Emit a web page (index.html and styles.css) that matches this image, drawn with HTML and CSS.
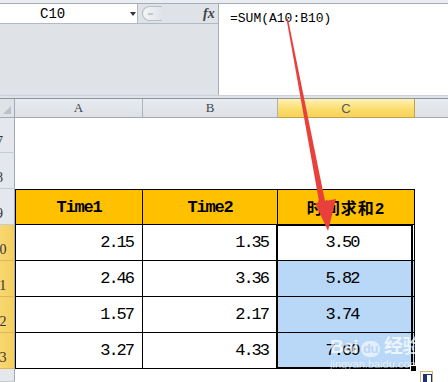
FILE: index.html
```html
<!DOCTYPE html>
<html lang="zh-CN">
<head>
    <meta charset="UTF-8">
    <title>时间求和</title>
    <link rel="stylesheet" href="styles.css">
</head>
<body>
    <div class="formula-area">
        <div class="left-pane">
            <div class="name-row">
                <div class="name-box">C10<span class="drop"></span></div>
                <div class="pill"><span></span></div>
                <div class="fx">fx</div>
            </div>
        </div>
        <div class="formula">=SUM(A10:B10)</div>
    </div>
    <div class="splitter"></div>

    <div class="sheet">
        <div class="corner"></div>
        <div class="col-head">A</div>
        <div class="col-head">B</div>
        <div class="col-head on">C</div>
        <div class="col-head blank"></div>

        <div class="row-head">7</div>
        <div class="empty"></div>
        <div class="row-head">8</div>
        <div class="empty"></div>

        <div class="row-head">9</div>
        <div class="cell title first">Time1</div>
        <div class="cell title">Time2</div>
        <div class="cell title cjk">时间求和2</div>
        <div></div>

        <div class="row-head on">10</div>
        <div class="cell num first">2.15</div>
        <div class="cell num">1.35</div>
        <div class="cell sum active">3.50</div>
        <div></div>

        <div class="row-head on">11</div>
        <div class="cell num first">2.46</div>
        <div class="cell num">3.36</div>
        <div class="cell sum sel">5.82</div>
        <div></div>

        <div class="row-head on">12</div>
        <div class="cell num first">1.57</div>
        <div class="cell num">2.17</div>
        <div class="cell sum sel">3.74</div>
        <div></div>

        <div class="row-head on">13</div>
        <div class="cell num first">3.27</div>
        <div class="cell num">4.33</div>
        <div class="cell sum sel">7.60</div>
        <div></div>

        <div class="row-head"></div>
        <div class="empty"></div>
    </div>

    <!-- paste options button and watermark sit over the grid -->
    <div class="paste"><span></span></div>
    <div class="mark">
        <div class="mark-top">Bai<span class="paw">du</span>经验</div>
        <div class="mark-url">jingyan.baidu.com</div>
    </div>

    <svg class="arrow" width="448" height="382" viewBox="0 0 448 382">
        <polygon points="286.5,19 288,19 326,206 320,207" fill="#e8403b"/>
        <polygon points="315,203 336,199 328,231" fill="#e8403b"/>
    </svg>
</body>
</html>
```

FILE: styles.css
```css
body, html {
    margin: 0;
    padding: 0;
    width: 448px;
    height: 382px;
    overflow: hidden;
    background-color: white;
    font-family: "Liberation Mono", "Noto Sans CJK SC", monospace;
    color: #000;
}
.formula-area {
    display: flex;
    height: 95px;
    box-sizing: border-box;
    padding-top: 3px;
    background-color: #e9ecf0;
}
.left-pane {
    width: 218px;
    background-color: #dfe3e8;
    border-top: 1px solid #a6adb5;
}
.name-row {
    display: flex;
    align-items: center;
    height: 19px;
    border-bottom: 1px solid #b3b9c1;
}
.name-box {
    position: relative;
    width: 138px;
    height: 19px;
    box-sizing: border-box;
    padding-left: 40px;
    background-color: white;
    border-right: 1px solid #b3b9c1;
    font-size: 14px;
    line-height: 20px;
}
.drop {
    position: absolute;
    left: 130px;
    top: 8px;
    border-left: 3px solid transparent;
    border-right: 3px solid transparent;
    border-top: 4px solid #333;
}
.pill {
    width: 20px;
    height: 15px;
    margin-left: 4px;
    box-sizing: border-box;
    border: 1px solid #b8bdc4;
    border-right: none;
    border-radius: 8px 0 0 8px;
    background: linear-gradient(90deg, #f4f5f7, #dfe3e8);
    display: flex;
    align-items: center;
    padding-left: 5px;
}
.pill span {
    width: 5px;
    height: 2px;
    background-color: #c4c8ce;
}
.fx {
    margin-left: 41px;
    font-family: "Liberation Serif", serif;
    font-style: italic;
    font-weight: bold;
    font-size: 14px;
    color: #444;
}
.formula {
    flex: 1;
    background-color: white;
    border-top: 1px solid #a6adb5;
    border-left: 1px solid #a6adb5;
    padding: 7px 0 0 11px;
    font-size: 13px;
    line-height: 16px;
}
.splitter {
    height: 2px;
    background-color: #dfe3e8;
    border-top: 1px solid #cdd2d8;
    border-bottom: 1px solid #8e969f;
}
.sheet {
    position: relative;
    display: grid;
    grid-template-columns: 30px 128px 135px 137px 1fr;
    grid-template-rows: 19px 35px 36px 36px 36px 36px 36px 36px 13px;
    margin-left: -15px;
}
.corner {
    position: relative;
    background-color: #dfe3e8;
    border-right: 1px solid #9eaab7;
    border-bottom: 1px solid #9eaab7;
}
.corner::after {
    content: "";
    position: absolute;
    right: 3px;
    bottom: 3px;
    border-left: 8px solid transparent;
    border-bottom: 8px solid #b9c0c8;
}
.col-head {
    display: flex;
    align-items: center;
    justify-content: center;
    background: linear-gradient(#e8ebef, #dde1e6);
    border-right: 1px solid #a9b3bd;
    border-bottom: 1px solid #9eaab7;
    font-family: "Liberation Serif", serif;
    font-size: 13px;
    color: #3c4650;
}
.col-head.on {
    background: linear-gradient(#fff1b5, #fbdc6a 60%, #f7d15a);
    border-right-color: #c1a24c;
    border-bottom-color: #c1a24c;
    font-family: "Liberation Sans", sans-serif;
    color: #55585c;
}
.col-head.blank {
    border-right: none;
}
.row-head {
    display: flex;
    align-items: flex-end;
    justify-content: center;
    padding-bottom: 2px;
    box-sizing: border-box;
    background-color: #e4e7ec;
    border-right: 1px solid #9eaab7;
    border-bottom: 1px solid #c5ccd4;
    font-family: "Liberation Serif", serif;
    font-size: 14px;
    color: #333;
}
.row-head.on {
    background: linear-gradient(90deg, #fbe08a, #f5cf5d);
    border-bottom-color: #d9b85a;
}
.empty {
    grid-column: span 4;
}
.cell {
    display: flex;
    align-items: center;
    box-sizing: border-box;
    border-right: 1px solid #000;
    border-bottom: 1px solid #000;
}
.cell.first {
    border-left: 1px solid #000;
}
.title {
    justify-content: center;
    background-color: #ffc000;
    border-top: 1px solid #000;
    font-weight: bold;
    font-size: 17px;
    letter-spacing: -1.2px;
}
.title.cjk {
    font-size: 16px;
    letter-spacing: 1px;
}
.num {
    justify-content: flex-end;
    padding-right: 9px;
    font-size: 17px;
    letter-spacing: -2px;
}
.sum {
    justify-content: center;
    padding-right: 8px;
    font-size: 17px;
    letter-spacing: -2px;
}
.sel {
    background-color: #b9d7f6;
}
.active {
    position: relative;
    background-color: white;
}
.active::after {
    content: "";
    position: absolute;
    left: -2px;
    top: -1px;
    width: 137px;
    height: 145px;
    box-sizing: border-box;
    border: 2px solid #000;
}
.active::before {
    content: "";
    position: absolute;
    left: 132px;
    top: 140px;
    width: 5px;
    height: 5px;
    background-color: #000;
    border: 1px solid white;
    z-index: 2;
}
.paste {
    position: absolute;
    left: 420px;
    top: 371px;
    width: 13px;
    height: 13px;
    box-sizing: border-box;
    border: 1px solid #c9b27a;
    background-color: #fdfaf0;
    padding: 2px;
}
.paste span {
    display: block;
    width: 7px;
    height: 7px;
    background: linear-gradient(90deg, #1c2f7a 50%, #ffffff 50%);
    border: 1px solid #1c2f7a;
}
.mark {
    position: absolute;
    left: 330px;
    top: 336px;
    color: rgba(255, 255, 255, 0.75);
    font-family: "Liberation Sans", "Noto Sans CJK SC", sans-serif;
    font-weight: bold;
}
.mark-top {
    font-size: 19px;
    line-height: 22px;
    letter-spacing: -0.5px;
}
.paw {
    display: inline-block;
    margin: 0 4px 0 3px;
    padding: 0 2px;
    border-radius: 8px;
    background-color: rgba(255, 255, 255, 0.6);
    color: #b9d7f6;
    font-size: 13px;
    line-height: 16px;
}
.mark-url {
    font-size: 11px;
    font-weight: normal;
    line-height: 12px;
    color: rgba(255, 255, 255, 0.6);
}
.arrow {
    position: absolute;
    left: 0;
    top: 0;
    pointer-events: none;
}
```
